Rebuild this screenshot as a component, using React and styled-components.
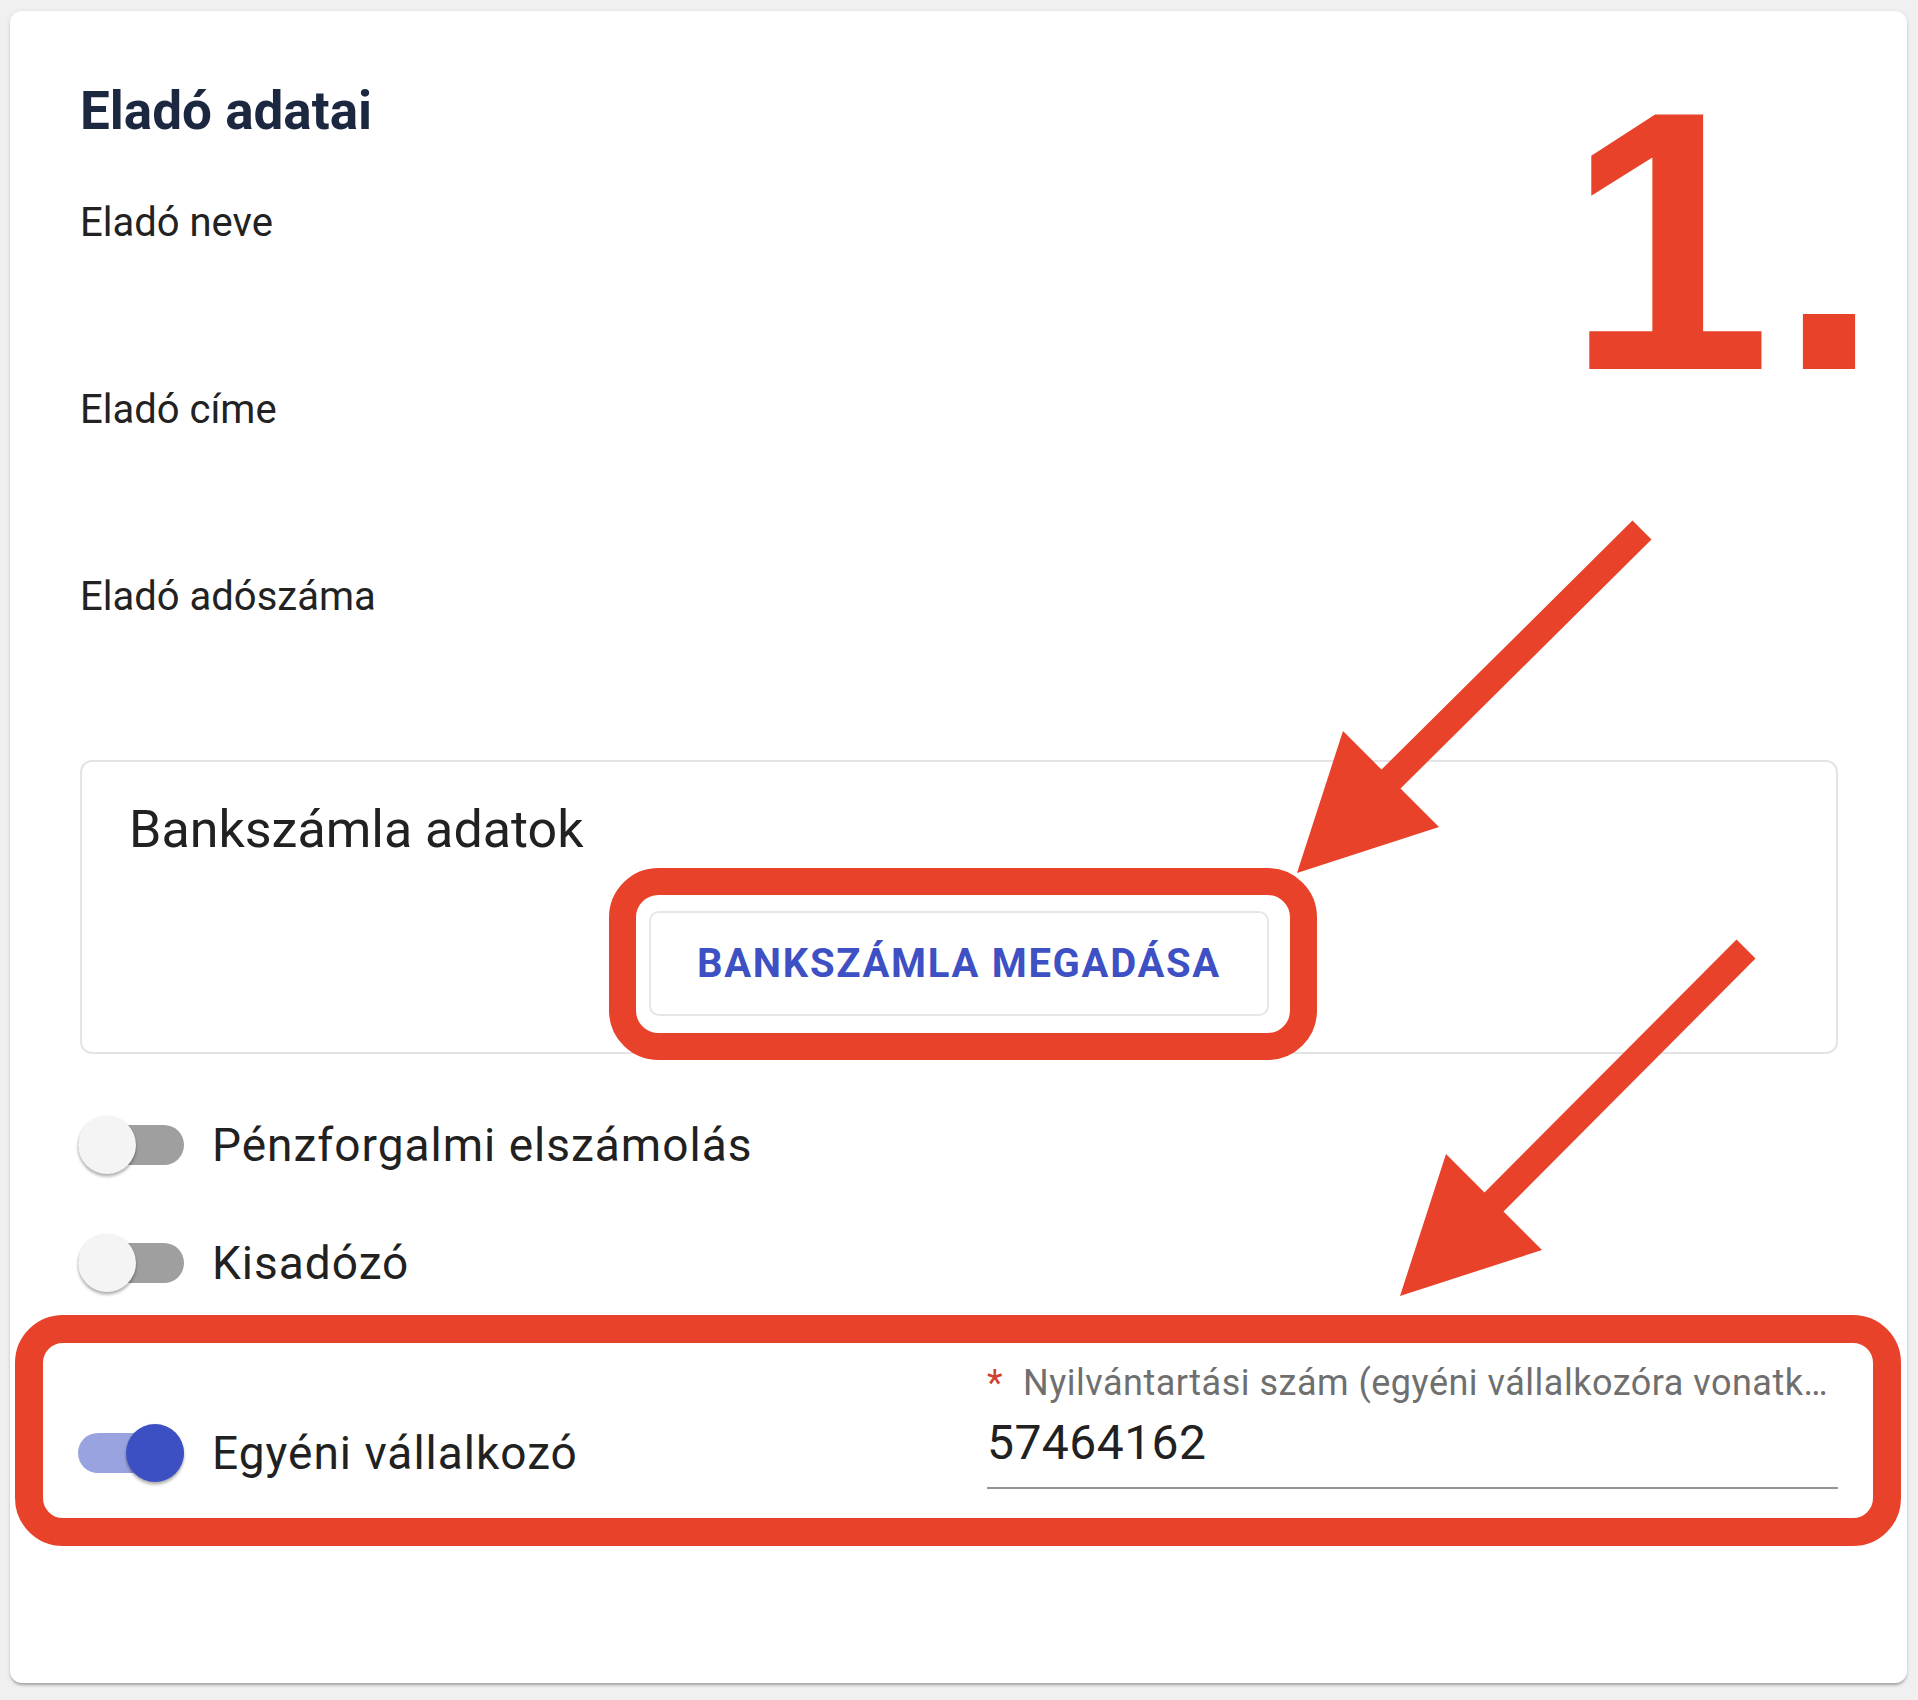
import React from 'react';
import styled, { createGlobalStyle } from 'styled-components';

const Global = createGlobalStyle`
  html, body { margin: 0; padding: 0; background: #f0f0f0; }
  body { font-family: Roboto, "Noto Sans", Arial, sans-serif; }
  * { box-sizing: border-box; }
`;

const RED = '#e8432a';

const Page = styled.div`
  position: relative;
  width: 1918px;
  height: 1700px;
  padding: 11px 11px 0 10px;
`;

const Card = styled.section`
  background: #fff;
  border-radius: 12px;
  box-shadow: 0 3px 3px -1px rgba(0, 0, 0, 0.28), 0 1px 5px rgba(0, 0, 0, 0.1);
  height: 1672px;
  padding: 68px 69px 0 70px;
`;

const Title = styled.h2`
  margin: 0;
  font-size: 53px;
  line-height: 64px;
  font-weight: 700;
  color: #1c2740;
`;

const FieldList = styled.div`
  margin-top: 56px;
  display: flex;
  flex-direction: column;
`;

const Field = styled.div`
  height: 187px;
`;

const FieldLabel = styled.div`
  font-size: 40px;
  line-height: 48px;
  color: #222;
`;

const BankBox = styled.div`
  border: 2px solid #e4e4e4;
  border-radius: 12px;
  padding: 37px 47px 36px;
  display: flex;
  flex-direction: column;
`;

const BankTitle = styled.h3`
  margin: 0;
  font-size: 52px;
  line-height: 62px;
  font-weight: 400;
  color: #212121;
`;

const BankButton = styled.button`
  align-self: center;
  margin-top: 50px;
  height: 105px;
  padding: 0 46px;
  border: 2px solid #e6e6e6;
  border-radius: 10px;
  background: #fff;
  font-family: Roboto, Arial, sans-serif;
  font-weight: 700;
  font-size: 40px;
  letter-spacing: 1.7px;
  color: #3d50c4;
  text-transform: uppercase;
  cursor: pointer;
`;

const Toggles = styled.div`
  margin-top: 32px;
  display: flex;
  flex-direction: column;
`;

const SwitchRow = styled.label`
  display: flex;
  align-items: center;
  height: 118px;
`;

const Switch = styled.span`
  position: relative;
  flex: none;
  width: 106px;
  height: 58px;
  margin-left: -2px;
`;

const Track = styled.span`
  position: absolute;
  left: 0;
  right: 0;
  top: 9px;
  height: 40px;
  border-radius: 20px;
  background: ${(p) => (p.$on ? '#98a3e0' : '#9f9f9f')};
`;

const Thumb = styled.span`
  position: absolute;
  top: 0;
  left: ${(p) => (p.$on ? '48px' : '0')};
  width: 58px;
  height: 58px;
  border-radius: 50%;
  background: ${(p) => (p.$on ? '#3d50c3' : '#f4f4f4')};
  box-shadow: 0 3px 3px rgba(0, 0, 0, 0.22), 0 1px 3px rgba(0, 0, 0, 0.16);
`;

const SwitchText = styled.span`
  margin-left: 28px;
  font-size: 46px;
  line-height: 54px;
  letter-spacing: 1px;
  color: #212121;
`;

const SoloRow = styled.div`
  display: grid;
  grid-template-columns: 1fr 1fr;
  column-gap: 56px;
  align-items: start;
`;

const LeftCol = styled.div`
  padding-top: 72px;
`;

const TextField = styled.div`
  margin-top: 40px;
  display: flex;
  flex-direction: column;
  min-width: 0;
`;

const InputLabel = styled.div`
  display: flex;
  align-items: baseline;
  font-size: 36px;
  line-height: 42px;
  letter-spacing: 0.5px;
  color: #6f6f6f;
  min-width: 0;
`;

const Asterisk = styled.span`
  flex: none;
  color: #d0402f;
  margin-right: 20px;
`;

const LabelText = styled.span`
  flex: 1;
  min-width: 0;
  white-space: nowrap;
  overflow: hidden;
  text-overflow: ellipsis;
`;

const InputValue = styled.div`
  margin-top: 10px;
  font-size: 48px;
  line-height: 58px;
  letter-spacing: 0.45px;
  color: #212121;
  padding-bottom: 15px;
  border-bottom: 2px solid #959595;
`;

const Overlay = styled.svg`
  position: absolute;
  left: 0;
  top: 0;
  pointer-events: none;
`;

const BigNumber = styled.div`
  position: absolute;
  top: 56px;
  left: 1566px;
  font-family: "Liberation Sans", Arial, sans-serif;
  font-weight: 700;
  font-size: 370px;
  line-height: 1;
  letter-spacing: 6px;
  color: ${RED};
  pointer-events: none;
`;

function Toggle({ on, children }) {
  return (
    <SwitchRow>
      <Switch>
        <Track $on={on} />
        <Thumb $on={on} />
      </Switch>
      <SwitchText>{children}</SwitchText>
    </SwitchRow>
  );
}

export default function App() {
  return (
    <>
      <Global />
      <Page>
        <Card>
          <Title>Eladó adatai</Title>
          <FieldList>
            <Field>
              <FieldLabel>Eladó neve</FieldLabel>
            </Field>
            <Field>
              <FieldLabel>Eladó címe</FieldLabel>
            </Field>
            <Field>
              <FieldLabel>Eladó adószáma</FieldLabel>
            </Field>
          </FieldList>
          <BankBox>
            <BankTitle>Bankszámla adatok</BankTitle>
            <BankButton type="button">Bankszámla megadása</BankButton>
          </BankBox>
          <Toggles>
            <Toggle on={false}>Pénzforgalmi elszámolás</Toggle>
            <Toggle on={false}>Kisadózó</Toggle>
          </Toggles>
          <SoloRow>
            <LeftCol>
              <Toggle on>Egyéni vállalkozó</Toggle>
            </LeftCol>
            <TextField>
              <InputLabel>
                <Asterisk>*</Asterisk>
                <LabelText>Nyilvántartási szám (egyéni vállalkozóra vonatkozóan)</LabelText>
              </InputLabel>
              <InputValue>57464162</InputValue>
            </TextField>
          </SoloRow>
        </Card>

        <BigNumber>1.</BigNumber>
        <Overlay width="1918" height="1700" viewBox="0 0 1918 1700">
          <rect x="622.5" y="881.5" width="681" height="165" rx="36" fill="none" stroke={RED} strokeWidth="27" />
          <rect x="29" y="1329" width="1858" height="203" rx="34" fill="none" stroke={RED} strokeWidth="28" />
          <polygon
            fill={RED}
            points="1632.5,520.5 1651.5,539.5 1400.5,788.5 1439,827 1297,873 1343,731 1381.5,769.5"
          />
          <polygon
            fill={RED}
            points="1736.5,939.5 1755.5,958.5 1503.5,1211.5 1542,1250 1400,1296 1446,1154 1484.5,1192.5"
          />
        </Overlay>
      </Page>
    </>
  );
}
